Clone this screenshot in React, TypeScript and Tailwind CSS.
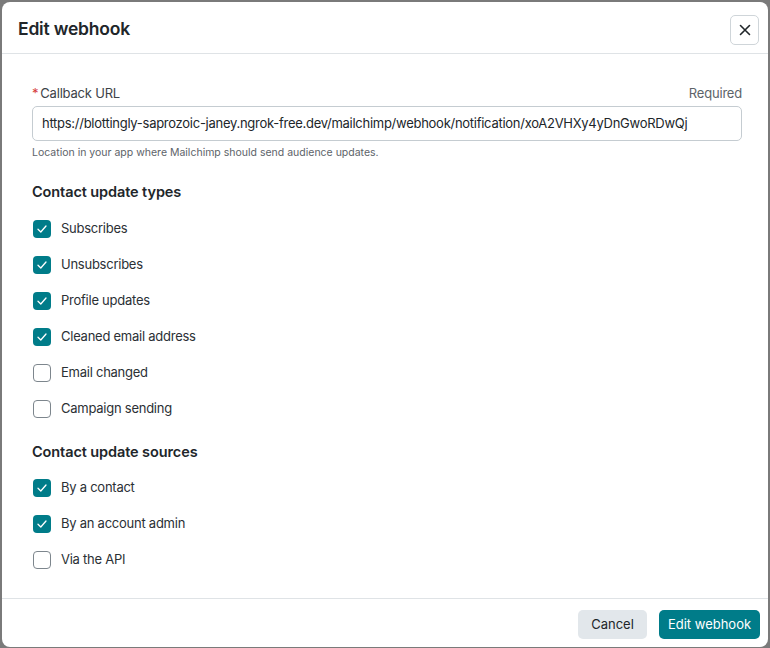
import React from "react";

const Check = ({ checked, label }: { checked: boolean; label: string }) => (
  <div className="flex items-center h-[36px]">
    <div
      className={
        checked
          ? "w-[18px] h-[18px] rounded-[4px] bg-[#007c89] flex items-center justify-center ml-[1px]"
          : "w-[18px] h-[18px] rounded-[4px] border-[1.5px] border-[#7d868d] bg-white ml-[1px]"
      }
    >
      {checked && (
        <svg width="12" height="12" viewBox="0 0 12 12" fill="none">
          <path d="M2 6.3 L4.8 9 L10 3" stroke="white" strokeWidth="1.3" strokeLinecap="round" strokeLinejoin="round" />
        </svg>
      )}
    </div>
    <span className="ml-[10px] text-[13px] tracking-[-0.25px] text-[#2b3035]">{label}</span>
  </div>
);

export default function App() {
  return (
    <div
      className="w-[770px] h-[648px] bg-[#7a7a7a] overflow-hidden pt-[2px] pl-[2px] pr-[2px]"
      style={{ fontFamily: "Inter, 'Noto Sans', sans-serif" }}
    >
      <div className="w-[766px] h-[645px] bg-white rounded-[8px] flex flex-col">
        <div className="h-[52px] flex items-center justify-between pl-[16px] pr-[9px] border-b border-[#dfe3e6]">
          <h1 className="text-[17.5px] font-semibold text-[#21262a] tracking-[-0.2px] mt-[3px]">Edit webhook</h1>
          <button className="w-[29px] h-[30px] border border-[#cfd5d9] rounded-[5px] flex items-center justify-center mt-[5px]">
            <svg width="14" height="14" viewBox="0 0 14 14">
              <path d="M2.5 2.5 L11.5 11.5 M11.5 2.5 L2.5 11.5" stroke="#21262a" strokeWidth="1.6" strokeLinecap="round" />
            </svg>
          </button>
        </div>
        <div className="flex-1 pl-[30px] pr-[26px] pt-[30px]">
          <div className="flex items-center justify-between h-[20px]">
            <div className="text-[13px] tracking-[-0.2px] text-[#3d4348]">
              <span className="text-[#d63b3b] mr-[2px]">*</span>Callback URL
            </div>
            <div className="text-[13px] tracking-[-0.2px] text-[#5d6369]">Required</div>
          </div>
          <div className="mt-[2px] h-[35px] border border-[#c5ccd1] rounded-[5px] flex items-center pl-[9px] text-[13px] tracking-[-0.27px] text-[#21262a]">
            https://blottingly-saprozoic-janey.ngrok-free.dev/mailchimp/webhook/notification/xoA2VHXy4yDnGwoRDwQj
          </div>
          <div className="mt-[4px] text-[10.5px] text-[#5d6369] h-[16px] leading-[16px]">
            Location in your app where Mailchimp should send audience updates.
          </div>
          <div className="mt-[20px] text-[14.5px] font-semibold tracking-[-0.1px] text-[#21262a] h-[22px] leading-[22px]">
            Contact update types
          </div>
          <div className="mt-[8px] flex flex-col">
            <Check checked label="Subscribes" />
            <Check checked label="Unsubscribes" />
            <Check checked label="Profile updates" />
            <Check checked label="Cleaned email address" />
            <Check checked={false} label="Email changed" />
            <Check checked={false} label="Campaign sending" />
          </div>
          <div className="mt-[14px] text-[14.5px] font-semibold tracking-[-0.1px] text-[#21262a] h-[22px] leading-[22px]">
            Contact update sources
          </div>
          <div className="mt-[7px] flex flex-col">
            <Check checked label="By a contact" />
            <Check checked label="By an account admin" />
            <Check checked={false} label="Via the API" />
          </div>
        </div>
        <div className="h-[49px] border-t border-[#dfe3e6] flex items-start justify-end pt-[11px] pr-[8px] gap-[12px]">
          <button className="w-[69px] h-[29px] rounded-[5px] bg-[#e2e7eb] text-[13px] text-[#21262a]">Cancel</button>
          <button className="w-[101px] h-[29px] rounded-[5px] bg-[#007c89] text-[13px] text-white">Edit webhook</button>
        </div>
      </div>
    </div>
  );
}
